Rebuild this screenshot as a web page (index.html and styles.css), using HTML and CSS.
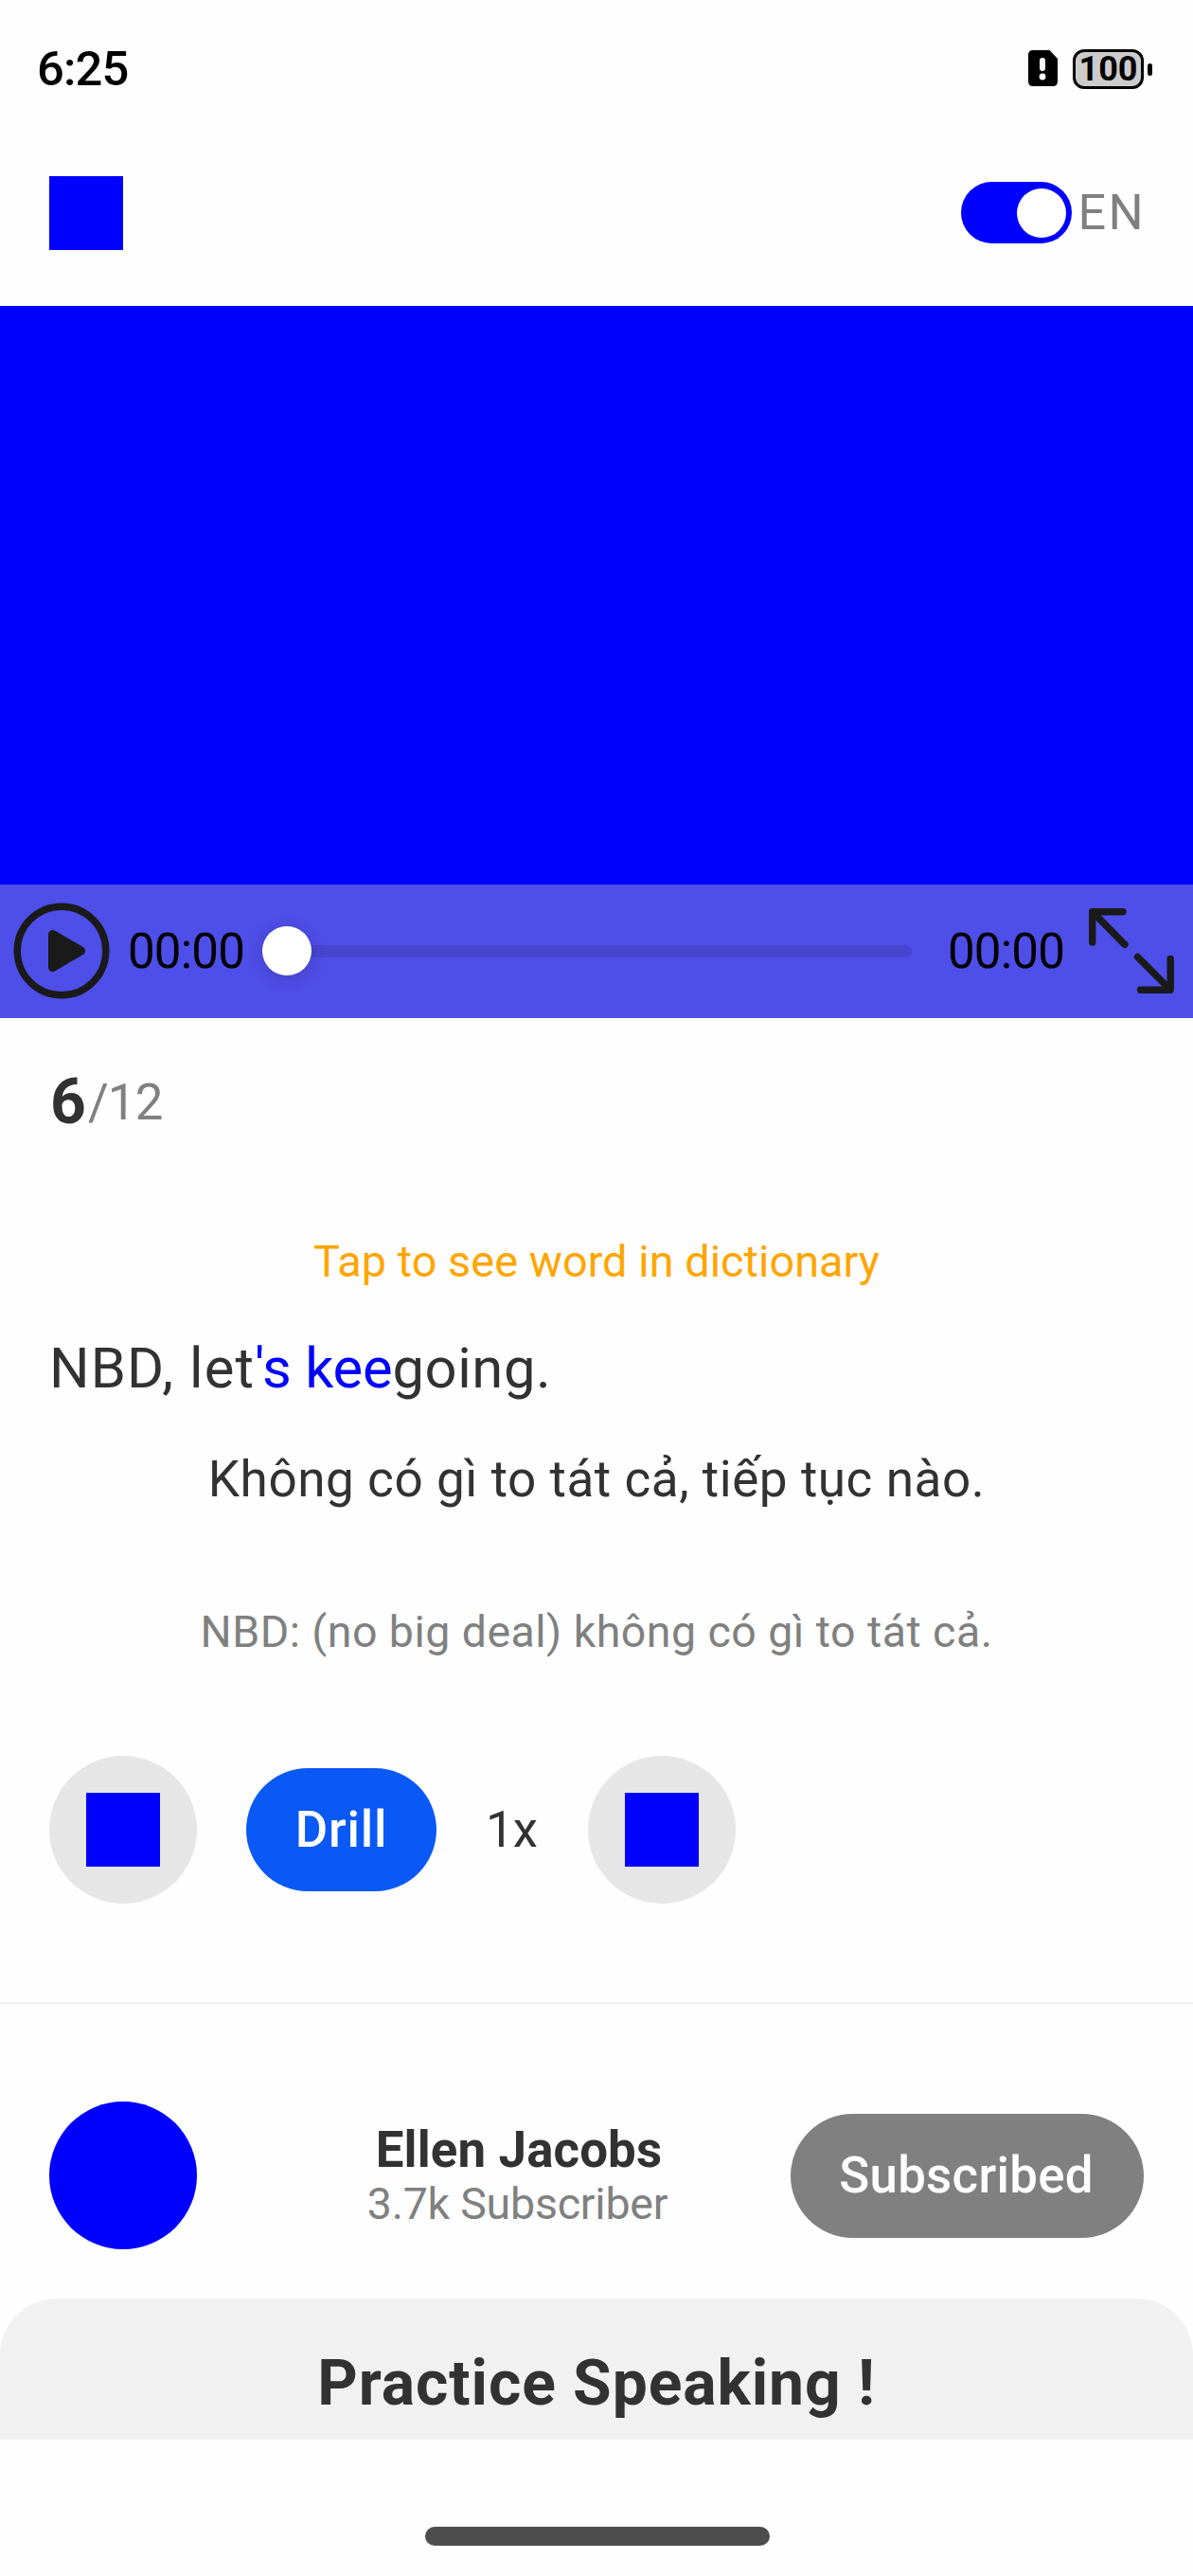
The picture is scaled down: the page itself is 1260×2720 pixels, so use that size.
FILE: index.html
```html
<!DOCTYPE html>
<html lang="en">
<head>
<meta charset="utf-8">
<title>Practice Speaking</title>
<link rel="stylesheet" href="styles.css">
</head>
<body>
<div class="status">
  <span class="clock">6:25</span>
  <span class="status-icons">
    <svg class="sim" width="31" height="38" viewBox="0 0 31 38">
      <path d="M5 0H22.500L31 9V33Q31 38 26 38H5Q0 38 0 33V5Q0 0 5 0Z" fill="#000"/>
      <rect x="12" y="8" width="6" height="14" rx="3" fill="#fff"/>
      <circle cx="15" cy="28" r="3.400" fill="#fff"/>
    </svg>
    <span class="battery">100</span>
    <span class="battery-tip"></span>
  </span>
</div>

<header class="header">
  <span class="square"></span>
  <span class="toggle"><span class="toggle-knob"></span></span>
  <span class="lang">EN</span>
</header>

<section class="video">
  <div class="controls">
    <svg width="102" height="102" viewBox="0 0 102 102">
      <circle cx="51" cy="51" r="46.800" fill="none" stroke="#1a1a1a" stroke-width="7.400"/>
      <path d="M41.500 33.500V68.500L71.500 51Z" fill="#1a1a1a" stroke="#1a1a1a" stroke-width="9" stroke-linejoin="round"/>
    </svg>
    <span class="time time-now">00:00</span>
    <span class="slider"><span class="slider-knob"></span></span>
    <span class="time time-total">00:00</span>
    <svg width="90" height="90" viewBox="0 0 90 90" fill="none" stroke="#1a1a1a" stroke-width="7.400" stroke-linecap="round" stroke-linejoin="round">
      <path d="M36 3.700H3.700V36M3.700 3.700L38 38.300M51.500 51.500L86 86M86.200 53.500V86.200H54.500"/>
    </svg>
  </div>
</section>

<div class="counter"><b>6</b><span>/12</span></div>
<p class="hint">Tap to see word in dictionary</p>
<p class="sentence"><span class="s-start">NBD, let</span><span class="s-mark">'s kee</span><span class="s-end">going.</span></p>
<p class="translation">Không có gì to tát cả, tiếp tục nào.</p>
<p class="note">NBD: (no big deal) không có gì to tát cả.</p>

<div class="actions">
  <span class="round"><span class="square"></span></span>
  <span class="drill">Drill</span>
  <span class="speed">1x</span>
  <span class="round"><span class="square"></span></span>
</div>
<div class="divider"></div>

<div class="profile">
  <span class="avatar"></span>
  <div class="who">
    <div class="name">Ellen Jacobs</div>
    <div class="subs">3.7k Subscriber</div>
  </div>
  <span class="subscribed">Subscribed</span>
</div>

<div class="sheet">Practice Speaking !</div>
<div class="home-bar"></div>
</body>
</html>
```
FILE: styles.css
```css
* { box-sizing: border-box; margin: 0; padding: 0; }
body {
  width: 1260px; height: 2720px; background: #fefefe; overflow: hidden;
  font-family: Roboto, "Noto Sans", sans-serif; color: #323232;
  white-space: nowrap; font-kerning: normal;
}
svg { display: block; flex: none; }

.status { height: 144px; padding: 0 43px 0 39px; display: flex; align-items: center; justify-content: space-between; color: #000; }
.clock { font-size: 50.7px; font-weight: 500; letter-spacing: -.8px; }
.status-icons { display: flex; align-items: center; }
.sim { margin-right: 16px; }
.battery {
  width: 75px; height: 42px; margin-top: 2px; border: 3px solid #000; border-radius: 12px; background: #ccc;
  font-size: 36px; font-weight: 700; line-height: 36px; text-align: center;
}
.battery-tip { width: 5px; height: 13px; margin: 2px 0 0 4px; border-radius: 3px; background: #000; }

.header { height: 179px; padding: 0 52px 18px; display: flex; align-items: center; }
.square { width: 78px; height: 78px; background: #00f; }
.toggle { width: 117px; height: 65px; margin-left: auto; padding: 0 6px; border-radius: 33px; background: #00f; display: flex; align-items: center; justify-content: flex-end; }
.toggle-knob { width: 52px; height: 52px; border-radius: 50%; background: #fff; }
.lang { width: 69.5px; margin-left: 6.5px; padding-bottom: 1px; font-size: 52.1px; letter-spacing: 2.4px; color: #808080; }

.video { height: 751.5px; background: #00f; display: flex; flex-direction: column; justify-content: flex-end; }
.controls { height: 140.5px; padding-left: 14px; background: #4e4ee8; display: flex; align-items: center; color: #000; }
.time { width: 123px; font-size: 51px; letter-spacing: -.8px; }
.time-now { margin-left: 19px; }
.time-total { margin-left: 38px; }
.controls .time + svg { margin-left: 26px; }
.slider { width: 686px; height: 13px; margin-left: 19px; border-radius: 7px; background: #4646d0; display: flex; align-items: center; }
.slider-knob { width: 52px; height: 52px; border-radius: 50%; background: #fff; box-shadow: 0 3px 18px rgba(0,0,0,.16); }

.counter { height: 178px; padding-left: 53px; display: flex; align-items: center; }
.counter b { font-size: 66px; margin-right: 2px; }
.counter span { font-size: 52.8px; letter-spacing: -.8px; color: #808080; }

.hint { margin-top: 40px; line-height: 79px; text-align: center; font-size: 46.8px; letter-spacing: .05px; color: #ffa500; }
.sentence { margin-top: 23px; padding-left: 52px; line-height: 100px; font-size: 59.7px; }
.s-start { letter-spacing: 1.1px; }
.s-mark { color: #00f; letter-spacing: -.2px; }
.s-end { letter-spacing: .6px; }
.translation { margin-top: 17.5px; line-height: 100px; text-align: center; font-size: 53.1px; letter-spacing: .53px; }
.note { margin-top: 71px; line-height: 80px; text-align: center; font-size: 46.5px; letter-spacing: .46px; color: #808080; }

.actions { margin-top: 91px; height: 156px; padding-left: 52px; display: flex; align-items: center; gap: 52px; }
.round { width: 156px; height: 156px; border-radius: 50%; background: #e6e6e6; display: flex; align-items: center; justify-content: center; }
.drill { width: 201px; height: 130px; border-radius: 65px; background: #0a59f7; color: #fff; font-size: 52.8px; font-weight: 500; letter-spacing: .8px; line-height: 130px; text-align: center; }
.speed { width: 56px; font-size: 52.8px; letter-spacing: -.8px; }
.divider { margin-top: 104px; height: 2px; background: #f0f0f0; }

.profile { margin-top: 103px; height: 156px; padding: 0 52px; display: flex; align-items: center; }
.avatar { width: 156px; height: 156px; border-radius: 50%; background: #00f; }
.who { flex: 1; padding-left: 53px; text-align: center; }
.name { font-size: 52.8px; font-weight: 700; line-height: 60px; letter-spacing: .14px; }
.subs { padding-right: 3px; font-size: 46.5px; line-height: 55px; letter-spacing: -.23px; color: #808080; }
.subscribed { width: 373px; height: 131px; padding-right: 2px; border-radius: 66px; background: #808080; color: #fff; font-size: 52.8px; font-weight: 500; letter-spacing: .3px; line-height: 131px; text-align: center; }

.sheet { margin-top: 52px; height: 149px; padding-top: 50px; border-radius: 60px 60px 0 0; background: #f1f1f1; line-height: 80px; text-align: center; font-size: 66px; font-weight: 700; letter-spacing: .92px; }
.home-bar { width: 364px; height: 20px; margin: 92px 0 0 449px; border-radius: 10px; background: #4d4d4d; }
```
